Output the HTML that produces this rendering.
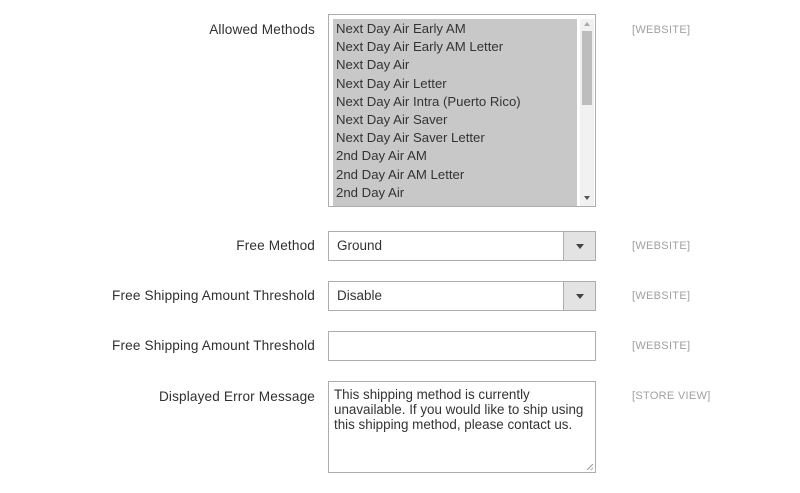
<!DOCTYPE html><html><head><style>
body{margin:0;width:800px;height:493px;background:#fff;font-family:"Liberation Sans",sans-serif;position:relative;overflow:hidden}
.l{position:absolute;right:485px;font-size:13.6px;letter-spacing:.15px;color:#303030;white-space:nowrap}
.s{position:absolute;left:632px;font-size:11px;color:#a0a0a0;letter-spacing:.3px}
.b{position:absolute;left:328px;width:266px;border:1px solid #adadad;background:#fff;box-sizing:content-box}
.sel{height:28px}
.sel span{position:absolute;left:8px;top:6px;font-size:13.5px;color:#333}
.sel i{position:absolute;right:0;top:0;width:31px;height:28px;background:#e3e3e3;border-left:1px solid #adadad}
.sel i:after{content:"";position:absolute;left:12px;top:12px;border:4px solid transparent;border-top:5px solid #444}
</style></head><body>
<div class="l" style="top:22px">Allowed Methods</div>
<div class="s" style="top:24px">[WEBSITE]</div>
<div class="b" style="top:14px;height:191px">
 <div style="position:absolute;left:4px;top:4px;width:244px;height:187px;background:#c8c8c8;font-size:13.2px;color:#333;line-height:18.2px;padding-left:3px;padding-top:1px;box-sizing:border-box;overflow:hidden">Next Day Air Early AM<br>Next Day Air Early AM Letter<br>Next Day Air<br>Next Day Air Letter<br>Next Day Air Intra (Puerto Rico)<br>Next Day Air Saver<br>Next Day Air Saver Letter<br>2nd Day Air AM<br>2nd Day Air AM Letter<br>2nd Day Air</div>
 <div style="position:absolute;left:251px;top:4px;width:14px;height:187px;background:#f1f1f1"></div>
 <div style="position:absolute;left:253px;top:16px;width:10px;height:74px;background:#bdbdbd"></div>
 <div style="position:absolute;left:255px;top:7px;border:3px solid transparent;border-bottom:4px solid #aaa;border-top:0"></div>
 <div style="position:absolute;left:255px;top:181px;border:3px solid transparent;border-top:4px solid #555;border-bottom:0"></div>
</div>
<div class="l" style="top:238px">Free Method</div>
<div class="s" style="top:240px">[WEBSITE]</div>
<div class="b sel" style="top:231px"><span>Ground</span><i></i></div>
<div class="l" style="top:288px">Free Shipping Amount Threshold</div>
<div class="s" style="top:290px">[WEBSITE]</div>
<div class="b sel" style="top:281px"><span>Disable</span><i></i></div>
<div class="l" style="top:338px">Free Shipping Amount Threshold</div>
<div class="s" style="top:340px">[WEBSITE]</div>
<div class="b" style="top:331px;height:28px"></div>
<div class="l" style="top:389px">Displayed Error Message</div>
<div class="s" style="top:390px">[STORE VIEW]</div>
<div class="b" style="top:381px;height:90px"><div style="position:absolute;left:5px;top:5px;width:262px;font-size:13.4px;color:#333;line-height:15px">This shipping method is currently unavailable. If you would like to ship using this shipping method, please contact us.</div>
<div style="position:absolute;right:2px;bottom:2px;width:6px;height:6px;background:linear-gradient(135deg,transparent 45%,#999 45%,#999 55%,transparent 55%,transparent 75%,#999 75%,#999 85%,transparent 85%)"></div></div>
</body></html>
